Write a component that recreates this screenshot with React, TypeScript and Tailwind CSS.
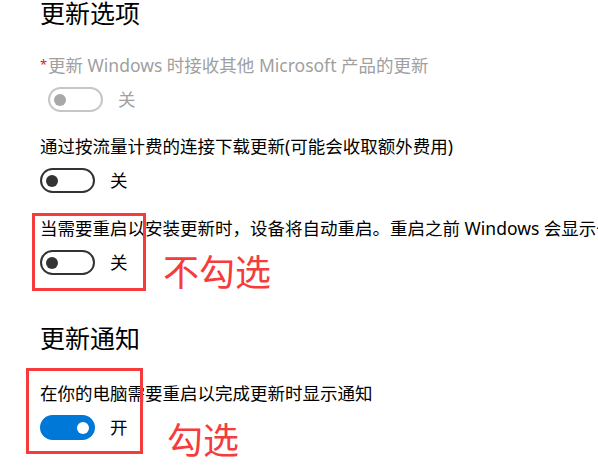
import React from "react";

const FONT = { fontFamily: '"Noto Sans", "Noto Sans CJK SC", sans-serif' };

type State = "off" | "disabled" | "on";

function Toggle({ state }: { state: State }) {
  if (state === "on") {
    return (
      <div className="w-[55px] h-[25px] rounded-full bg-[#0078d7] flex items-center justify-end pr-[6px]">
        <div className="w-[12px] h-[12px] rounded-full bg-white" />
      </div>
    );
  }
  const dis = state === "disabled";
  return (
    <div
      className={
        "w-[55px] h-[25px] rounded-full border-2 flex items-center pl-[4px] " +
        (dis ? "border-[#c6c6c6]" : "border-[#333333]")
      }
    >
      <div className={"w-[12px] h-[12px] rounded-full " + (dis ? "bg-[#a8a8a8]" : "bg-[#333333]")} />
    </div>
  );
}

function ToggleRow({ state, label }: { state: State; label: string }) {
  return (
    <div className="h-[25px] flex items-center gap-[15px]">
      <Toggle state={state} />
      <span className={"text-[17.5px] leading-[25px] " + (state === "disabled" ? "text-[#a0a0a0]" : "text-[#000000]")}>
        {label}
      </span>
    </div>
  );
}

function Setting({ text, state, label, muted }: { text: React.ReactNode; state: State; label: string; muted?: boolean }) {
  return (
    <div className="flex flex-col gap-[10px]">
      <div className={"text-[17.5px] leading-[24px] " + (muted ? "text-[#a0a0a0]" : "text-[#000000]")}>{text}</div>
      <ToggleRow state={state} label={label} />
    </div>
  );
}

export default function App() {
  return (
    <div
      className="relative w-[598px] h-[471px] overflow-hidden bg-white pl-[40px] whitespace-nowrap flex flex-col"
      style={FONT}
    >
      <h2 className="text-[25px] leading-[26px] text-[#000000] font-normal">更新选项</h2>

      <div className="pl-[8px] mt-[27px]">
        <Setting
          muted
          state="disabled"
          label="关"
          text={
            <span className="relative">
              <span className="absolute left-[-8px] top-[-1px] text-[13px] leading-[24px] text-[#e81123]">*</span>
              更新 Windows 时接收其他 Microsoft 产品的更新
            </span>
          }
        />
      </div>

      <div className="mt-[22px]">
        <Setting state="off" label="关" text="通过按流量计费的连接下载更新(可能会收取额外费用)" />
      </div>

      <div className="mt-[23px] relative">
        <Setting
          state="off"
          label="关"
          text="当需要重启以安装更新时，设备将自动重启。重启之前 Windows 会显示一条通知。"
        />
        {/* annotation overlay */}
        <div className="absolute left-[-8px] top-[-3px] w-[114px] h-[78px] border-[3px] border-[#f53b3b]" />
        <div className="absolute left-[123px] top-[33px] text-[36px] leading-[48px] text-[#f53b3b]">不勾选</div>
      </div>

      <h2 className="mt-[50px] text-[25px] leading-[26px] text-[#000000] font-normal">更新通知</h2>

      <div className="mt-[30px] relative">
        <Setting state="on" label="开" text="在你的电脑需要重启以完成更新时显示通知" />
        {/* annotation overlay */}
        <div className="absolute left-[-14px] top-[-13px] w-[117px] h-[86px] border-[3px] border-[#f53b3b]" />
        <div className="absolute left-[127px] top-[36px] text-[36px] leading-[48px] text-[#f53b3b]">勾选</div>
      </div>
    </div>
  );
}
